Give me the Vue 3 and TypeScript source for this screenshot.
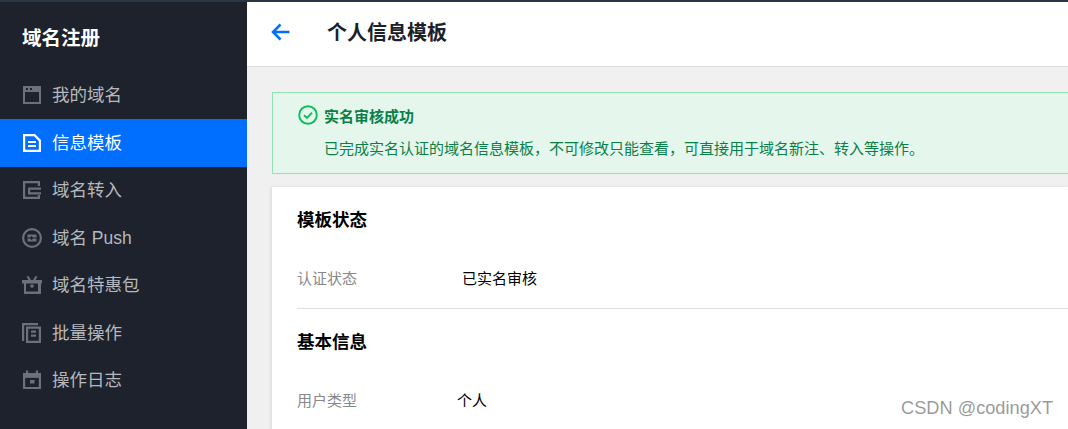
<script setup lang="ts">
interface MenuItem {
  label: string;
  icon: string;
  active?: boolean;
}

const menu: MenuItem[] = [
  { label: '我的域名', icon: 'window' },
  { label: '信息模板', icon: 'doc', active: true },
  { label: '域名转入', icon: 'wallet' },
  { label: '域名 Push', icon: 'push' },
  { label: '域名特惠包', icon: 'gift' },
  { label: '批量操作', icon: 'copy' },
  { label: '操作日志', icon: 'calendar' }
];
</script>

<template>
  <div class="page">
    <aside class="sidebar">
      <div class="brand">域名注册</div>
      <nav>
        <a v-for="item in menu" :key="item.label" class="menu-item" :class="{ active: item.active }">
          <svg class="menu-icon" viewBox="0 0 18 18" fill="currentColor">
            <template v-if="item.icon === 'window'">
              <path fill-rule="evenodd" d="M0 0h18v18H0zM2 6v10h14V6zM3 2v2h2V2zM7 2v2h2V2z" />
            </template>
            <template v-else-if="item.icon === 'doc'">
              <path fill-rule="evenodd" d="M0 0h12l6 6v12H0zM2.200 2.200v13.600h13.600V7l-4.800-4.800z" />
              <path d="M5 7h8v2H5zM5 11h8v2H5z" />
            </template>
            <template v-else-if="item.icon === 'wallet'">
              <path d="M0 0h17v5h-2.200V2.200H2.200v13.600h12.600V14H17v4H0z" />
              <path d="M5 6.500h13v2.200H7.200v2.600H18v2.200H5z" />
            </template>
            <template v-else-if="item.icon === 'push'">
              <circle cx="9" cy="9" r="8.900" fill="none" stroke="currentColor" stroke-width="2.200" />
              <path d="M4.500 5.500h9v3h-3.500L8.500 7 7 8.500H4.500zM4.500 9.500H7L8.500 11 10 9.500h3.500v3h-9z" />
            </template>
            <template v-else-if="item.icon === 'gift'">
              <path fill-rule="evenodd" d="M-1 4h20v3.500h-1V18H1V7.500H-1zM3 7.500v8h12v-8z" />
              <path d="M3.500 0.800L5.500 0l2.500 4H5.500zM14.500 0.800L12.500 0l-2.500 4h2.500z" />
              <circle cx="9" cy="10" r="1.800" />
            </template>
            <template v-else-if="item.icon === 'copy'">
              <path d="M-1-1h16v2.200H1.200V17H-1z" />
              <path fill-rule="evenodd" d="M3 2.500h15V19H3zM5.200 4.700v12.100h10.600V4.700z" />
              <path d="M8 6.500h5v2.200H8zM8 10.500h5v2.200H8z" />
            </template>
            <template v-else>
              <path fill-rule="evenodd" d="M0 2h3V-0.500h2.200V2h7.600V-0.500H15V2h3v16H0zM2.200 16h13.600V6.500H2.200z" />
              <path d="M7 9h4.500v3.500H7zM0 2h18v4.800H0z" />
            </template>
          </svg>
          <span>{{ item.label }}</span>
        </a>
      </nav>
    </aside>

    <main class="main">
      <header class="topbar">
        <svg class="back" viewBox="0 0 20 20" fill="none" stroke="#006eff" stroke-width="2.500">
          <path d="M18.500 10H2.500M9.500 2.500L2 10l7.500 7.500" />
        </svg>
        <h1>个人信息模板</h1>
      </header>

      <div class="content">
        <section class="alert">
          <div class="alert-title">
            <svg class="check" viewBox="0 0 20 20" fill="none" stroke="#0abf5b" stroke-width="1.900">
              <circle cx="10" cy="10" r="8.800" />
              <path d="M6 10.200l3 2.800 5-5.400" />
            </svg>
            <strong>实名审核成功</strong>
          </div>
          <p>已完成实名认证的域名信息模板，不可修改只能查看，可直接用于域名新注、转入等操作。</p>
        </section>

        <section class="card">
          <div class="block first">
            <h2>模板状态</h2>
            <div class="row">
              <span class="label">认证状态</span>
              <span class="value">已实名审核</span>
            </div>
          </div>
          <div class="block">
            <h2>基本信息</h2>
            <div class="row">
              <span class="label">用户类型</span>
              <span class="value person">个人</span>
            </div>
          </div>
        </section>
      </div>
    </main>

    <div class="watermark">CSDN @codingXT</div>
  </div>
</template>

<style>
html,
body {
  margin: 0;
  overflow: hidden;
}
</style>

<style scoped>
.page {
  position: relative;
  display: flex;
  width: 1068px;
  height: 429px;
  overflow: hidden;
  border-top: 2px solid #2c3545;
  box-sizing: border-box;
  font-family: "Noto Sans CJK SC", "Liberation Sans", sans-serif;
}

.sidebar {
  flex: 0 0 247px;
  background-color: #1e222d;
  color: #b5b8bd;
}

.brand {
  height: 69px;
  line-height: 70px;
  padding-left: 22px;
  font-size: 19.5px;
  font-weight: 700;
  color: #fff;
}

.menu-item {
  display: flex;
  align-items: center;
  height: 47.5px;
  padding-left: 23px;
  font-family: "Liberation Sans", "Noto Sans CJK SC", sans-serif;
  font-size: 17.5px;
}

.menu-item span {
  margin-top: -3px;
}

.menu-item.active {
  height: 48px;
  background-color: #006eff;
  color: #fff;
}

.menu-icon {
  width: 18px;
  height: 18px;
  margin-right: 11px;
  color: #6b7179;
  overflow: visible;
}

.menu-item.active .menu-icon {
  color: #fff;
}

.main {
  flex: 1;
  min-width: 0;
  background-color: #f0f0f0;
}

.topbar {
  display: flex;
  align-items: center;
  height: 60px;
  padding: 0 0 4px 24px;
  background-color: #fff;
  border-bottom: 1px solid #ddd;
}

.back {
  width: 20px;
  height: 20px;
  margin-right: 36px;
}

.topbar h1 {
  margin: -1px 0 0;
  font-size: 20px;
  font-weight: 700;
  color: #1c2029;
}

.content {
  padding: 25px 0 0 25px;
}

.alert {
  height: 82px;
  box-sizing: border-box;
  padding: 11px 0 0 25px;
  background-color: #e5f6ec;
  border: 1px solid #94e3b6;
  border-right: none;
  color: #0a8048;
  font-size: 15px;
}

.alert-title {
  display: flex;
  align-items: center;
  height: 22px;
}

.check {
  width: 20px;
  height: 20px;
  margin-right: 6px;
}

.alert-title strong {
  font-size: 15px;
  font-weight: 700;
}

.alert p {
  margin: 11px 0 0 26px;
  line-height: 22px;
}

.card {
  margin-top: 13px;
  padding-left: 25px;
  background-color: #fff;
  box-shadow: -1px 0 3px rgba(0, 0, 0, 0.1);
}

.block {
  height: 122px;
}

.block.first {
  height: 121px;
  border-bottom: 1px solid #ddd;
}

.block h2 {
  margin: 0;
  padding-top: 19px;
  font-size: 17.5px;
  line-height: 26px;
  font-weight: 700;
  color: #000;
}

.row {
  display: flex;
  align-items: center;
  margin-top: 35px;
  font-size: 15px;
  line-height: 22px;
}

.label {
  width: 165px;
  color: #888;
}

.value {
  color: #000;
}

.person {
  margin-left: -5px;
}

.watermark {
  position: absolute;
  right: 15px;
  bottom: 10px;
  font-family: "Liberation Sans", sans-serif;
  font-size: 18.2px;
  color: rgba(120, 120, 120, 0.75);
}
</style>
